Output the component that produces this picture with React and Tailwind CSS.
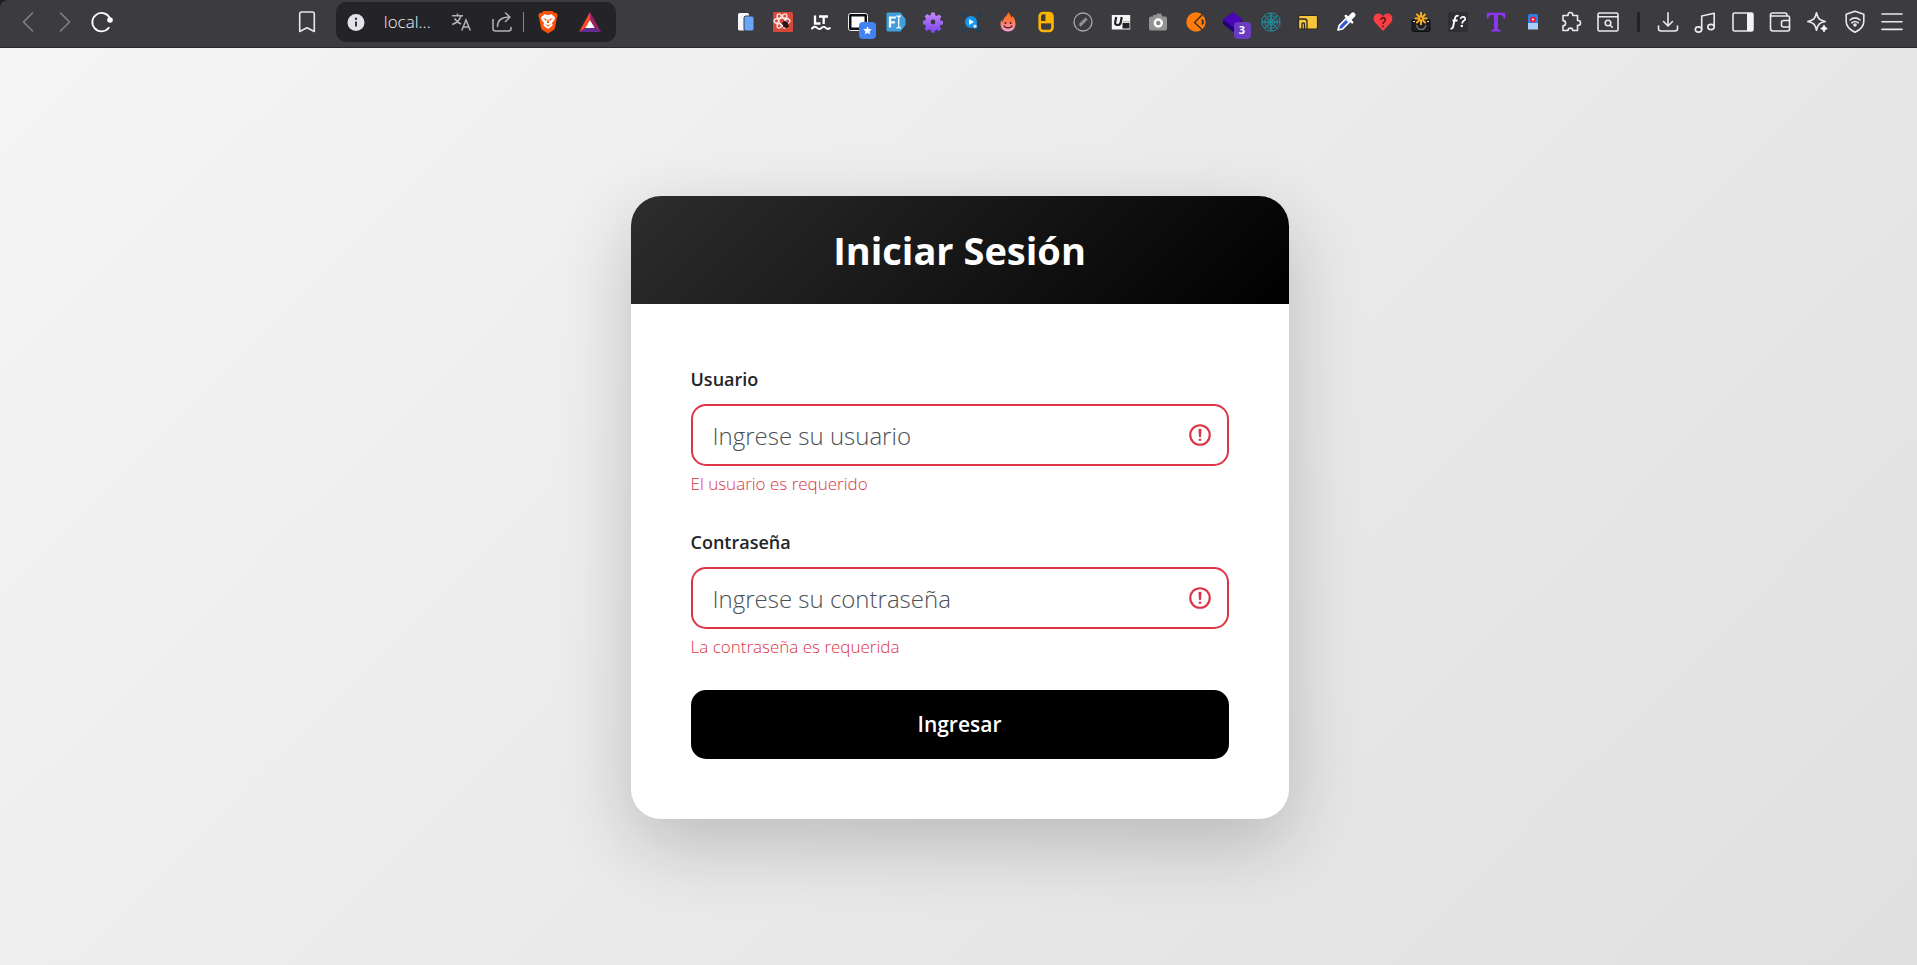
import React from "react";

const line = {
  fill: "none",
  stroke: "#e9e9ec",
  strokeWidth: 1.6,
  strokeLinecap: "round",
  strokeLinejoin: "round",
};

function Icon({ children }) {
  return (
    <svg viewBox="0 0 20 20" className="h-5 w-5 overflow-visible" aria-hidden="true">
      {children}
    </svg>
  );
}

function ToolButton({ name, badge, children }) {
  return (
    <button type="button" aria-label={name} className="relative flex h-8 flex-1 items-center justify-center">
      <Icon>{children}</Icon>
      {badge}
    </button>
  );
}

const webRing = (r) =>
  [0, 45, 90, 135, 180, 225, 270, 315]
    .map((a) => {
      const t = ((a + 22.5) * Math.PI) / 180;
      return `${(10 + r * Math.cos(t)).toFixed(1)},${(10 + r * Math.sin(t)).toFixed(1)}`;
    })
    .join(" ");

const extensions = [
  {
    name: "Documentos",
    art: (
      <>
        <rect x="2" y="1" width="11" height="17.5" rx="1.5" fill="#f5f7fb" />
        <rect x="8" y="4" width="10" height="15" rx="2" fill="#6aa5f8" stroke="#3c3b40" strokeWidth="1" />
      </>
    ),
  },
  {
    name: "React Scan",
    art: (
      <>
        <rect width="20" height="20" rx="1.5" fill="#d8483a" />
        <g fill="none" stroke="#f7e9e6" strokeWidth="1.3">
          <ellipse cx="9" cy="9" rx="8" ry="3" />
          <ellipse cx="9" cy="9" rx="8" ry="3" transform="rotate(60 9 9)" />
          <ellipse cx="9" cy="9" rx="8" ry="3" transform="rotate(120 9 9)" />
        </g>
        <ellipse cx="12.5" cy="12.5" rx="2.6" ry="3.6" transform="rotate(-35 12.5 12.5)" fill="#2b1512" />
        <path d="M8.500 11.500l7.500 3M9.500 15.500l6-5.500M12 9l1 7.500" stroke="#2b1512" strokeWidth="1" />
      </>
    ),
  },
  {
    name: "LanguageTool",
    art: (
      <>
        <path d="M4 3.500v8h5.500M8 4.500h9M12.700 4.500v7.500" fill="none" stroke="#fff" strokeWidth="2.300" />
        <path d="M1 16.500c2-2.300 3.600-2.300 5.200-.6 1.600 1.600 2.800 1.600 4.300 0 1.500-1.600 2.800-1.600 4.300 0 1.300 1.300 2.600 1.200 4 .2" fill="none" stroke="#fff" strokeWidth="2" strokeLinecap="round" />
      </>
    ),
  },
  {
    name: "Ventanas",
    art: (
      <>
        <rect x=".5" y="1.500" width="19" height="17" rx="2" fill="#111" stroke="#f1f1f1" strokeWidth="1" />
        <rect x="3.500" y="4.500" width="13" height="11" fill="#fff" />
      </>
    ),
    badge: (
      <span className="absolute top-4 left-[19px] flex h-[17px] w-[17px] items-center justify-center rounded bg-[#4183f0]">
        <svg viewBox="0 0 10 10" className="h-[9px] w-[9px]" aria-hidden="true">
          <path d="M5 .3l1.400 3.100 3.400.3-2.600 2.300.8 3.400L5 7.600 2 9.400l.8-3.400L.2 3.700l3.400-.3z" fill="#fff" />
        </svg>
      </span>
    ),
  },
  {
    name: "Fuentes",
    art: (
      <>
        <path d="M2 .5h12.500l5 6.500v6l-5 6.500H2A1.500 1.500 0 0 1 .5 18V2A1.500 1.500 0 0 1 2 .5z" fill="#419fdc" />
        <path d="M4 15.500V5.500h6M4 10.300h5" fill="none" stroke="#fff" strokeWidth="2.200" />
        <path d="M10.500 4c1 0 2 .3 2.200 1v10c-.2.700-1.200 1-2.200 1M15 4c-1 0-2 .3-2.300 1M15 16c-1 0-2-.3-2.300-1" fill="none" stroke="#fff" strokeWidth="1.300" />
      </>
    ),
  },
  {
    name: "Ajustes",
    art: (
      <>
        <defs>
          <linearGradient id="gear" x1="0" y1="0" x2="0" y2="20" gradientUnits="userSpaceOnUse">
            <stop offset="0" stopColor="#c98af7" />
            <stop offset="1" stopColor="#7c45f5" />
          </linearGradient>
        </defs>
        <path
          d="M8.300.5h3.400l.5 2.800 1.600.7 2.300-1.600 2.400 2.400-1.600 2.300.7 1.600 2.400.4v3.400l-2.600.5-.7 1.600 1.600 2.300-2.400 2.400-2.300-1.600-1.600.7-.5 2.400H8.300l-.5-2.600-1.600-.7-2.300 1.600-2.400-2.400 1.600-2.300-.7-1.600L0 12.300V8.700l2.400-.4.700-1.600-1.600-2.300 2.400-2.400 2.300 1.600 1.600-.7z"
          fill="url(#gear)"
        />
        <circle cx="10" cy="10" r="2.400" fill="#3c3b40" />
      </>
    ),
  },
  {
    name: "Grabador",
    art: (
      <>
        <path d="M1 5V2.500Q1 1 2.500 1H5M15 1h2.500Q19 1 19 2.500V5M19 15v2.500q0 1.500-1.500 1.500H15M5 19H2.500Q1 19 1 17.500V15" fill="none" stroke="#11435f" strokeWidth="1.600" />
        <circle cx="10" cy="10" r="6" fill="#1496f0" />
        <path d="M8 7l5 3-5 3z" fill="#fff" />
        <circle cx="14" cy="14.200" r="2" fill="#d8efff" stroke="#1496f0" strokeWidth=".8" />
      </>
    ),
  },
  {
    name: "Llama",
    art: (
      <>
        <defs>
          <linearGradient id="flame" x1="0" y1="0" x2="0" y2="1">
            <stop offset="0" stopColor="#ff6a00" />
            <stop offset=".5" stopColor="#ff7a55" />
            <stop offset="1" stopColor="#f7a2d8" />
          </linearGradient>
        </defs>
        <path d="M10 0c2 2 3.500 4 3.300 6 .8-.5 1.200-1.300 1.200-2.300C16.500 6 17.500 9 17.500 12c0 4.500-3.200 7.500-7.500 7.500S2.500 16.500 2.500 12c0-1.500.2-2.700.8-4 .5 1 1 1.500 1.700 1.700C5 7.500 6 6 7.500 4.500 9 3 10 1.700 10 0z" fill="url(#flame)" />
        <circle cx="7.500" cy="11" r="1" fill="#4a1c20" />
        <circle cx="12.700" cy="11" r="1" fill="#4a1c20" />
        <path d="M5.800 13.500c1.500 3.200 7 3.200 8.500 0" fill="none" stroke="#4a1c20" strokeWidth="1.200" />
      </>
    ),
  },
  {
    name: "Ratón",
    art: (
      <>
        <rect x="3.700" y="1" width="12.800" height="18" rx="3.500" fill="#3c3b40" stroke="#ffb400" strokeWidth="2.600" />
        <path d="M9.500 1h4q3 0 3 3v6.500h-7z" fill="#ffb400" />
        <path d="M4 10.200h12.500" stroke="#ffb400" strokeWidth="2.400" />
      </>
    ),
  },
  {
    name: "Regla",
    art: (
      <>
        <circle cx="10" cy="10" r="9" fill="none" stroke="#a9a9ac" strokeWidth="1.300" />
        <path d="M6.500 13.700l7-7.200" stroke="#98989b" strokeWidth="3.200" />
        <path d="M6 12l1.500 1.500M8.500 9.500l1.500 1.500M11 7l1.500 1.500" stroke="#55555a" strokeWidth=".8" />
      </>
    ),
  },
  {
    name: "Unidades",
    art: (
      <>
        <rect x=".8" y="3" width="18.400" height="14.500" fill="#f6f6f6" />
        <path d="M5.200 5l-1 5.200q-.5 2.800 2.300 2.800t3.300-2.800L10.700 5" fill="none" stroke="#222" strokeWidth="2.200" />
        <rect x="11.500" y="11" width="7" height="5.500" fill="#222" />
        <path d="M12 9.800h7" stroke="#888" strokeWidth=".8" />
      </>
    ),
  },
  {
    name: "Captura",
    art: (
      <>
        <path d="M3 4.500h2V3h3l1-1.500h4l1.500 3H17a2 2 0 0 1 2 2v10a2 2 0 0 1-2 2H3a2 2 0 0 1-2-2v-10a2 2 0 0 1 2-2z" fill="#939393" />
        <circle cx="10.300" cy="11" r="3.500" fill="#8a8a8a" stroke="#fff" strokeWidth="2.400" />
      </>
    ),
  },
  {
    name: "Zorro",
    art: (
      <>
        <circle cx="10" cy="10" r="9.700" fill="#ff7b0a" />
        <path d="M16.500 2.500L8.500 10.500l7.500 7" fill="none" stroke="#332a28" strokeWidth="1.300" />
        <path d="M16 7.500q2 3 0 5" fill="none" stroke="#332a28" strokeWidth="1.600" />
      </>
    ),
  },
  {
    name: "Capas",
    art: (
      <>
        <path d="M0 8v4l10 8 9-8V8z" fill="#22007a" />
        <path d="M10 0l10 7.500L10 15 0 7.500z" fill="#4a06b4" />
      </>
    ),
    badge: (
      <span className="absolute top-4 left-[19px] flex h-[17px] w-[17px] items-center justify-center rounded bg-[#6b3cc2] text-[11px] font-bold text-white">
        3
      </span>
    ),
  },
  {
    name: "Telaraña",
    art: (
      <g fill="none" stroke="#1d9aab" strokeWidth="1">
        <polygon points={webRing(9.5)} />
        <polygon points={webRing(6.5)} />
        <polygon points={webRing(3.5)} />
        <path d="M10 1v18M1 10h18M3.500 3.500l13 13M16.500 3.500l-13 13" />
      </g>
    ),
  },
  {
    name: "Metro",
    art: (
      <>
        <rect x=".5" y="3.500" width="19" height="13.500" rx="1.500" fill="#f7c53b" stroke="#2c281c" strokeWidth="1.200" />
        <path d="M1 7h5.500q2.500 0 2.500 2.500V17M4 17v-5q0-1 1.300-1T6.500 12v5" fill="none" stroke="#2c281c" strokeWidth="1.300" />
      </>
    ),
  },
  {
    name: "Cuentagotas",
    art: (
      <>
        <path d="M2 18l1.200-4.500L11 5.500 14.500 9l-8 8z" fill="#3a5bd0" stroke="#fff" strokeWidth="1.700" strokeLinejoin="round" />
        <path d="M10 8l3-2.500 2 2L12 10z" fill="#fff" />
        <path d="M9.800 4l6.400 6.400" stroke="#fff" strokeWidth="2.500" strokeLinecap="round" />
        <path d="M13.500 6.500l3.500-3.500" stroke="#fff" strokeWidth="5" strokeLinecap="round" />
      </>
    ),
  },
  {
    name: "Corazón",
    art: (
      <>
        <path d="M10 19L2 10.500C-.8 7 .8 1.500 5 1.500c2.500 0 4 1.300 5 3 1-1.700 2.500-3 5-3 4.200 0 5.800 5.500 3 9z" fill="#f83f45" />
        <path d="M8 8q.3-2.200 2.300-2.200T12.300 8q0 1.300-1.300 2t-1 2.200" fill="none" stroke="#561014" strokeWidth="1.400" />
        <circle cx="9.900" cy="14.300" r=".9" fill="#561014" />
      </>
    ),
  },
  {
    name: "Cámara mágica",
    art: (
      <>
        <rect x="1" y="7.500" width="18" height="12" rx="1.500" fill="#1f1f1f" stroke="#0f0f0f" />
        <path d="M5.500 13q1 4.500 4.700 4.500T15 13" fill="none" stroke="#77777a" strokeWidth="1.200" />
        <path d="M10 .8v11.400M4.300 6.500h11.400M6 2.500l8 8M14 2.500l-8 8" stroke="#f7ae25" strokeWidth="2" strokeLinecap="round" />
        <circle cx="10" cy="6.500" r="1" fill="#4a3410" />
        <path d="M2 9.500h2M16 9.500h2" stroke="#ddd" strokeWidth="1" />
      </>
    ),
  },
  {
    name: "Buscador de fuentes",
    art: (
      <>
        <rect width="20" height="20" rx="2" fill="#303033" />
        <path d="M10.500 4q-2.800-1.200-3.500 2.300L5 15q-.6 2-2.500 1.500M4.500 8.500h5" fill="none" stroke="#fff" strokeWidth="1.900" />
        <path d="M12.500 6.800q.4-2 2.700-1.900 2.300.2 2 2.100-.2 1.200-1.700 2-1.200.7-1.300 2.600" fill="none" stroke="#fff" strokeWidth="1.700" />
        <circle cx="13.800" cy="14" r="1.200" fill="#fff" />
      </>
    ),
  },
  {
    name: "Tipografía",
    art: <path d="M.8.800h18.400v6h-1.400Q17.300 3 14.500 3H12v13.500q0 1.500 2.500 1.500v1.500h-9V18Q8 18 8 16.500V3H5.500Q2.700 3 2.200 6.800H.8z" fill="#8b34f2" />,
  },
  {
    name: "Altavoz",
    art: (
      <>
        <path d="M5 4q0-2 2-2h6q2 0 2 2v13H5z" fill="#2f7fee" />
        <rect x="5" y="11" width="10" height="6.500" fill="#a8cbf7" />
        <circle cx="10" cy="7.500" r="2" fill="#fff" stroke="#ee1c2e" strokeWidth="1.900" />
      </>
    ),
  },
  {
    name: "Extensiones",
    art: (
      <path
        d="M2 3.500h5V3a2.400 2.400 0 0 1 4.800-.2v.7h4.700v5h.6a2.400 2.400 0 0 1 0 4.800h-.6v5.200h-4.700a2.400 2.400 0 0 0-4.800 0H2v-4.700a2.600 2.600 0 0 0 0-5.200z"
        {...line}
      />
    ),
  },
  {
    name: "Buscar en pestañas",
    art: (
      <g {...line}>
        <rect x="0" y="1" width="20" height="18" rx="1.500" />
        <path d="M0 4.800h20" />
        <circle cx="10" cy="11" r="2.800" />
        <path d="M12.200 13.200l2 2" />
      </g>
    ),
  },
];

const browserTools = [
  {
    name: "Descargas",
    art: <path d="M10 .8v13M5.500 9.500l4.500 4.500 4.500-4.500M.5 14v2.500q0 2.500 2.500 2.500h14q2.500 0 2.500-2.500V14" {...line} />,
  },
  {
    name: "Multimedia",
    art: (
      <g {...line}>
        <ellipse cx="3.500" cy="17.500" rx="3.200" ry="2.600" />
        <ellipse cx="16" cy="15" rx="3.200" ry="2.600" />
        <path d="M6.700 17.500V4l12.500-2.800V15" />
      </g>
    ),
  },
  {
    name: "Barra lateral",
    art: (
      <>
        <rect x="0" y="1" width="20" height="18" rx="1.500" {...line} />
        <rect x="14" y="1" width="6" height="18" rx="1" fill="#f4f4f6" />
      </>
    ),
  },
  {
    name: "Cartera",
    art: (
      <g {...line}>
        <path d="M19.500 8.500V5.500q0-1.500-1.500-1.500H.5v12.500q0 2.500 2.500 2.500h15q1.500 0 1.500-1.500V15" />
        <path d="M.5 4V3q0-2 2-2H15q2 0 2 2.500M19.500 8.500h-6q-2 0-2 2V13q0 2 2 2h6z" />
      </g>
    ),
  },
  {
    name: "Asistente",
    art: (
      <>
        <path d="M9.500.8c1.400 6 2.700 7.300 8.700 8.700-6 1.400-7.300 2.700-8.700 8.700C8.100 12.200 6.800 10.900.8 9.500c6-1.400 7.300-2.700 8.700-8.700z" {...line} />
        <path d="M17 13q.5 3 3.300 3.500Q17.500 17 17 20q-.5-3-3.300-3.500Q16.500 16 17 13z" fill="#fff" stroke="#fff" strokeWidth=".8" />
      </>
    ),
  },
  {
    name: "VPN",
    art: (
      <g {...line}>
        <path d="M10-.8l8.800 3v7.300q0 6.500-8.800 10.800Q1.200 16 1.200 9.500V2.200z" />
        <path d="M5 8q5-4.200 10 0M6.800 10.800q3.200-2.600 6.400 0" />
        <circle cx="10" cy="13" r="1" fill="#e9e9ec" />
      </g>
    ),
  },
  { name: "Menú", art: <path d="M0 2h20M0 9.700h20M0 17.400h20" {...line} /> },
];

function AddressBar() {
  return (
    <div className="flex h-10 w-[280px] items-center rounded-[10px] bg-[#242328]">
      <button type="button" aria-label="Información del sitio" className="flex w-10 justify-center">
        <Icon>
          <circle cx="10" cy="10.500" r="8.500" fill="#e4e3ea" />
          <path d="M10 9.500v5" stroke="#38373c" strokeWidth="2" />
          <circle cx="10" cy="6.800" r="1.200" fill="#38373c" />
        </Icon>
      </button>
      <a href="#inicio" className="ml-2 w-[56px] text-[17px] font-light text-[#f0f0f2]">
        local...
      </a>
      <button type="button" aria-label="Traducir" className="flex w-[42px] justify-center">
        <svg viewBox="0 0 20 20" className="h-5 w-5" aria-hidden="true">
          <path
            d="M1 3.800h11M6.500 1.500v2.300M3.500 6.500q2.500 4 6.500 5.500M9.800 4q-1.500 6-8.600 8.500M10.800 18.500L15 8l4.300 10.500M12.300 15h5.500"
            fill="none"
            stroke="#b4b4b8"
            strokeWidth="1.500"
          />
        </svg>
      </button>
      <button type="button" aria-label="Compartir" className="flex w-[41px] justify-center">
        <Icon>
          <g fill="none" stroke="#b4b4b8" strokeWidth="1.500" strokeLinecap="round" strokeLinejoin="round">
            <path d="M1 7.500v9Q1 19 3.500 19h13q2.500 0 2.500-2.500v-1" />
            <path d="M5.500 14.500Q5.500 5 17.500 5M13.500 1l4.500 4-4.500 4.500" />
          </g>
        </Icon>
      </button>
      <span className="h-5 w-px bg-[#85858a]" />
      <button type="button" aria-label="Escudos" className="flex w-[48px] justify-center">
        <svg viewBox="0 0 20 24" className="h-6 w-5" aria-hidden="true">
          <path d="M5.500 1h9L16.500 3l2-.3 1.200 3-.9 2.300-1.700 9.500q-.3 1.700-1.800 2.800L10 23.500l-5.300-3.200q-1.500-1.100-1.800-2.800L1.200 8 .3 5.700l1.200-3 2 .3z" fill="#fc5209" />
          <path d="M10 5l3.500-.8L17 7.500l-.7 2.500-2.300 3 .7 2.500L10 19l-4.700-3.500.7-2.500-2.300-3L3 7.500l3.500-3.300z" fill="#fff" />
          <path d="M5 8.300l3.500.8-.3 2zM15 8.300l-3.500.8.3 2zM7 13.700l3 1.500 3-1.500-3 3zM9.500 9.500h1l.6 3.500H8.900z" fill="#fc5209" />
        </svg>
      </button>
      <button type="button" aria-label="Recompensas" className="flex w-9 justify-center">
        <svg viewBox="0 0 22 20" className="h-5 w-[22px]" aria-hidden="true">
          <path d="M11 0L0 20l6.500-4L11 8z" fill="#ff4a24" />
          <path d="M11 0l11 20-6.500-4L11 8z" fill="#9e1f63" />
          <path d="M0 20l6.500-4h9L22 20z" fill="#662d91" />
          <path d="M11 8l4.700 8H6.300z" fill="#fff" />
        </svg>
      </button>
    </div>
  );
}

function BrowserToolbar() {
  return (
    <header className="bg-[#1d1c20]">
      <div className="flex h-12 items-center rounded-tl-lg border-b border-[#2d2630] bg-[#3c3b40] pr-[6px] pb-[3px] pl-[9px]">
        <nav className="flex w-[112px] shrink-0" aria-label="Navegación">
          <ToolButton name="Atrás">
            <path d="M14.500 1l-9 9 9 9" fill="none" stroke="#828187" strokeWidth="1.600" strokeLinecap="round" />
          </ToolButton>
          <ToolButton name="Adelante">
            <path d="M5.500 1l9 9-9 9" fill="none" stroke="#828187" strokeWidth="1.600" strokeLinecap="round" />
          </ToolButton>
          <ToolButton name="Recargar">
            <path d="M16.800 15.800A9.200 9.200 0 1 1 18 6.500" fill="none" stroke="#fff" strokeWidth="1.800" strokeLinecap="round" />
            <circle cx="18" cy="8" r="2.800" fill="#fff" />
          </ToolButton>
        </nav>
        <div className="flex-[3]" />
        <div className="flex w-[48px] shrink-0 pr-[10px]">
          <ToolButton name="Marcador">
            <path d="M2.700 2Q2.700 0 4.700 0h10.600q2 0 2 2v17.500L10 15.700l-7.300 3.800z" {...line} />
          </ToolButton>
        </div>
        <div className="shrink-0">
          <AddressBar />
        </div>
        <div className="flex-[2]" />
        <div className="flex w-[900px] shrink-0">
          {extensions.map((e) => (
            <ToolButton key={e.name} name={e.name} badge={e.badge}>
              {e.art}
            </ToolButton>
          ))}
        </div>
        <div className="flex w-[22px] shrink-0 justify-center">
          <span className="h-5 w-[3px] rounded-full bg-[#222126]" />
        </div>
        <div className="flex w-[262px] shrink-0">
          {browserTools.map((t) => (
            <ToolButton key={t.name} name={t.name}>
              {t.art}
            </ToolButton>
          ))}
        </div>
      </div>
    </header>
  );
}

function Field({ id, type, label, placeholder, error }) {
  return (
    <div className="mb-[30px]">
      <label htmlFor={id} className="mb-[10px] block text-[18px] leading-[30px] font-semibold text-[#212529]">
        {label}
      </label>
      <div className="relative">
        <input
          id={id}
          type={type}
          placeholder={placeholder}
          aria-invalid="true"
          aria-describedby={`${id}-error`}
          className="block h-[62px] w-full rounded-[15px] border-2 border-[#dc3545] bg-white pr-14 pl-5 text-[24px] font-light text-[#212529] outline-none placeholder:text-[#4a4f54]"
        />
        <svg viewBox="0 0 12 12" className="absolute top-[18px] right-4 h-[26px] w-[26px]" aria-hidden="true">
          <circle cx="6" cy="6" r="4.500" fill="none" stroke="#dc3545" />
          <path d="M5.800 3.600h.4L6 6.500z" fill="#dc3545" stroke="#dc3545" strokeLinejoin="round" />
          <circle cx="6" cy="8.200" r=".6" fill="#dc3545" />
        </svg>
      </div>
      <p id={`${id}-error`} className="mt-[5px] text-[17px] leading-[26px] font-light text-[#dc3545]">
        {error}
      </p>
    </div>
  );
}

export default function App() {
  return (
    <div className="flex min-h-screen flex-col font-['Open_Sans','Noto_Sans',sans-serif]">
      <BrowserToolbar />
      <main className="flex flex-1 items-center justify-center bg-[linear-gradient(135deg,#f5f5f5,#e0e0e0)] pt-[42px] pr-4 pb-10 pl-[18px]">
        <section className="w-full max-w-[658px] overflow-hidden rounded-[30px] bg-white shadow-[0_25px_75px_rgba(0,0,0,0.2)]">
          <div className="bg-[linear-gradient(135deg,#2d2d2d,#000000)] px-8 py-[30px] text-center">
            <h1 className="text-[38px] leading-[48px] font-bold text-white">Iniciar Sesión</h1>
          </div>
          <form className="p-[60px]" noValidate onSubmit={(e) => e.preventDefault()}>
            <Field
              id="usuario"
              type="text"
              label="Usuario"
              placeholder="Ingrese su usuario"
              error="El usuario es requerido"
            />
            <Field
              id="contrasena"
              type="password"
              label="Contraseña"
              placeholder="Ingrese su contraseña"
              error="La contraseña es requerida"
            />
            <button type="submit" className="block h-[69px] w-full rounded-[15px] bg-black text-[21px] font-semibold text-white">
              Ingresar
            </button>
          </form>
        </section>
      </main>
    </div>
  );
}
